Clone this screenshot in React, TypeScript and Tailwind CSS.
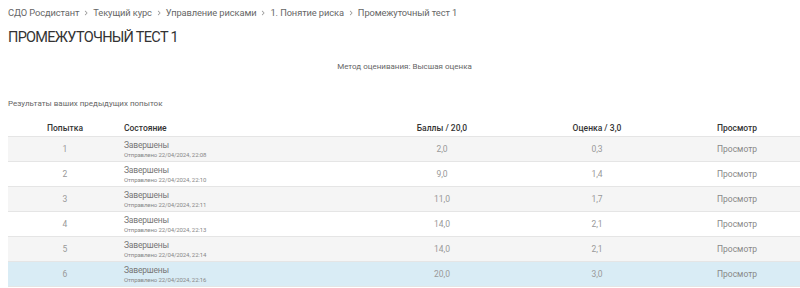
import { FaAngleRight } from "react-icons/fa6";

type Attempt = {
  n: number;
  sent: string;
  score: string;
  grade: string;
};

const attempts: Attempt[] = [
  { n: 1, sent: "22/04/2024, 22:08", score: "2,0", grade: "0,3" },
  { n: 2, sent: "22/04/2024, 22:10", score: "9,0", grade: "1,4" },
  { n: 3, sent: "22/04/2024, 22:11", score: "11,0", grade: "1,7" },
  { n: 4, sent: "22/04/2024, 22:13", score: "14,0", grade: "2,1" },
  { n: 5, sent: "22/04/2024, 22:14", score: "14,0", grade: "2,1" },
  { n: 6, sent: "22/04/2024, 22:16", score: "20,0", grade: "3,0" },
];

const crumbs = ["СДО Росдистант", "Текущий курс", "Управление рисками", "1. Понятие риска", "Промежуточный тест 1"];

function rowBg(i: number) {
  if (i === 5) return "bg-[#d9ecf5]";
  return i % 2 === 0 ? "bg-[#f5f5f5]" : "bg-white";
}

export default function App() {
  return (
    <div className="w-[800px] h-[288px] overflow-hidden bg-white font-['Roboto',sans-serif] text-[#777]">
      <div className="flex items-center gap-[4px] pl-[8px] pt-[6px] h-[20px] text-[9.3px] tracking-[-0.1px] text-[#666]">
        {crumbs.map((c, i) => (
          <span key={c} className="flex items-center gap-[4px]">
            {i > 0 && <FaAngleRight className="w-[6px] h-[6px] text-[#999]" />}
            {c}
          </span>
        ))}
      </div>
      <h1 className="pl-[8px] mt-[8px] text-[14.5px] tracking-[-0.7px] leading-[20px] text-[#333] uppercase">
        Промежуточный тест 1
      </h1>
      <p className="mt-[13px] pl-[9px] text-center text-[8px] leading-[12px] text-[#666]">
        Метод оценивания: Высшая оценка
      </p>
      <p className="mt-[25px] pl-[8px] text-[8px] leading-[12px] text-[#666]">Результаты ваших предыдущих попыток</p>

      <div className="ml-[8px] mt-[10px] w-[822px]">
        <div className="grid grid-cols-[114px_212px_216px_94px_186px] h-[17px] items-center text-[8.5px] font-medium text-[#333] border-b border-[#e5e5e5]">
          <div className="text-center">Попытка</div>
          <div className="pl-[2px]">Состояние</div>
          <div className="text-center">Баллы / 20,0</div>
          <div className="text-center">Оценка / 3,0</div>
          <div className="text-center">Просмотр</div>
        </div>
        {attempts.map((a, i) => (
          <div
            key={a.n}
            className={`grid grid-cols-[114px_212px_216px_94px_186px] h-[25px] items-center text-[8.5px] border-b border-[#e5e5e5] ${rowBg(i)}`}
          >
            <div className="text-center text-[#999]">{a.n}</div>
            <div className="pl-[2px] flex flex-col leading-[10px]">
              <span className="text-[8.5px] tracking-[-0.2px] text-[#777]">Завершены</span>
              <span className="text-[6px] leading-[9px] tracking-[-0.1px] text-[#888]">Отправлено {a.sent}</span>
            </div>
            <div className="text-center text-[#999]">{a.score}</div>
            <div className="text-center text-[#999]">{a.grade}</div>
            <div className="text-center text-[#888]">Просмотр</div>
          </div>
        ))}
      </div>
    </div>
  );
}
